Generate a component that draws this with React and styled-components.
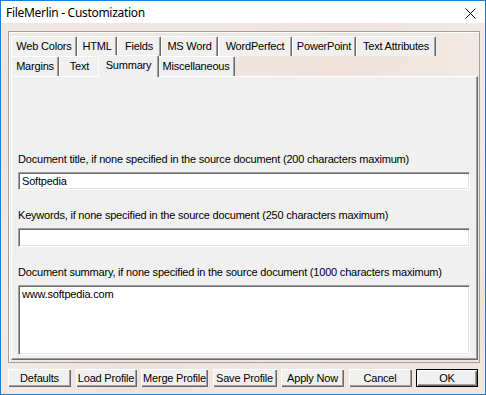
import React from "react";
import styled, { createGlobalStyle } from "styled-components";

const GlobalStyle = createGlobalStyle`
  html, body {
    margin: 0;
    padding: 0;
    background: #ffffff;
  }
  body {
    font-family: "Liberation Sans", Arial, sans-serif;
    font-size: 11px;
    letter-spacing: -0.2px;
    color: #000;
  }
`;

const Window = styled.div`
  width: 486px;
  height: 395px;
  box-sizing: border-box;
  border: 1px solid #1b7fd6;
  display: flex;
  flex-direction: column;
  background-color: #f3ebe6;
  background-image:
    radial-gradient(ellipse at 20% 30%, rgba(232, 214, 204, 0.6), transparent 40%),
    radial-gradient(ellipse at 70% 15%, rgba(236, 222, 214, 0.7), transparent 35%),
    radial-gradient(ellipse at 85% 80%, rgba(234, 220, 210, 0.6), transparent 40%),
    radial-gradient(ellipse at 30% 95%, rgba(236, 222, 214, 0.7), transparent 35%);
`;

const TitleBar = styled.div`
  height: 22px;
  flex: none;
  background: #ffffff;
  display: flex;
  align-items: center;
  justify-content: space-between;
  padding: 0 9px 0 5px;
`;

const Title = styled.span`
  font-family: "Noto Sans", "Segoe UI", sans-serif;
  font-size: 12px;
  letter-spacing: -0.3px;
  color: #000;
`;

const CloseButton = styled.span`
  display: flex;
  width: 12px;
  height: 12px;
  margin-top: 2px;
  align-items: center;
  justify-content: center;
`;

const Client = styled.div`
  flex: 1;
  display: flex;
  flex-direction: column;
  padding: 8px 5px 0 7px;
`;

const Frame = styled.div`
  height: 332px;
  box-sizing: border-box;
  border: 1px solid #a0a0a0;
  box-shadow: inset 1px 1px 0 #ffffff;
  padding: 4px 1px 2px 2px;
  display: flex;
  flex-direction: column;
`;

const TabRow = styled.div`
  display: flex;
  height: 20px;
  align-items: flex-end;
`;

const Tab = styled.div`
  width: ${(p) => p.$w}px;
  height: ${(p) => (p.$active ? 22 : 20)}px;
  margin: ${(p) => (p.$active ? "0 -2px -1px -2px" : "0")};
  position: relative;
  z-index: ${(p) => (p.$active ? 2 : 1)};
  box-sizing: border-box;
  background: #f0f0f0;
  border-top: 1px solid #ffffff;
  border-left: 1px solid #ffffff;
  border-right: 1px solid #696969;
  box-shadow: inset -1px 0 0 #a0a0a0;
  border-radius: 2px 2px 0 0;
  display: flex;
  align-items: center;
  justify-content: center;
  padding-bottom: ${(p) => (p.$active ? 4 : 2)}px;
  white-space: nowrap;
`;

const Panel = styled.div`
  flex: 1;
  box-sizing: border-box;
  background: #f0f0f0;
  border-top: 1px solid #ffffff;
  border-left: 1px solid #ffffff;
  border-right: 1px solid #696969;
  border-bottom: 1px solid #696969;
  box-shadow: inset -1px -1px 0 #a0a0a0;
  padding: 76px 0 0 6px;
  display: flex;
  flex-direction: column;
`;

const Field = styled.div`
  display: flex;
  flex-direction: column;
  margin-bottom: 19px;
  &:last-child {
    margin-bottom: 0;
  }
`;

const Label = styled.label`
  line-height: 13px;
  height: 13px;
  margin-bottom: 6px;
  white-space: nowrap;
`;

const TextBox = styled.div`
  width: 452px;
  height: ${(p) => p.$h}px;
  box-sizing: border-box;
  background: #ffffff;
  border-top: 1px solid #a0a0a0;
  border-left: 1px solid #a0a0a0;
  border-right: 1px solid #ffffff;
  border-bottom: 1px solid #ffffff;
  box-shadow: inset 1px 1px 0 #696969, inset -1px -1px 0 #e3e3e3;
  padding: 2px 3px;
  line-height: 13px;
`;

const ButtonBar = styled.div`
  display: flex;
  justify-content: space-between;
  padding: 6px 0 0 0;
  width: 470px;
`;

const Button = styled.div`
  width: ${(p) => p.$w}px;
  height: 18px;
  box-sizing: border-box;
  overflow: hidden;
  background: #f0f0f0;
  border: 1px solid ${(p) => (p.$default ? "#000000" : "transparent")};
  box-shadow: ${(p) =>
    p.$default
      ? "inset 1px 1px 0 #ffffff, inset -1px -1px 0 #696969, inset -2px -2px 0 #a0a0a0"
      : "inset 1px 1px 0 #ffffff, inset -1px -1px 0 #696969, inset -2px -2px 0 #a0a0a0"};
  border-width: ${(p) => (p.$default ? "1px" : "0")};
  display: flex;
  align-items: center;
  justify-content: center;
  white-space: nowrap;
  padding-bottom: 1px;
`;

const row1 = [
  ["Web Colors", 66],
  ["HTML", 40],
  ["Fields", 44],
  ["MS Word", 57],
  ["WordPerfect", 74],
  ["PowerPoint", 64],
  ["Text Attributes", 80],
];

const row2 = [
  ["Margins", 48],
  ["Text", 41],
  ["Summary", 61, true],
  ["Miscellaneous", 78],
];

const buttons = [
  ["Defaults", 63],
  ["Load Profile", 61],
  ["Merge Profile", 67],
  ["Save Profile", 64],
  ["Apply Now", 63],
  ["Cancel", 63],
  ["OK", 62, true],
];

export default function App() {
  return (
    <>
      <GlobalStyle />
      <Window>
        <TitleBar>
          <Title>FileMerlin - Customization</Title>
          <CloseButton>
            <svg width="11" height="11" viewBox="0 0 11 11">
              <path d="M0.5 0.5 L10.5 10.5 M10.5 0.5 L0.5 10.5" stroke="#000" strokeWidth="1" />
            </svg>
          </CloseButton>
        </TitleBar>
        <Client>
          <Frame>
            <TabRow>
              {row1.map(([t, w]) => (
                <Tab key={t} $w={w}>{t}</Tab>
              ))}
            </TabRow>
            <TabRow>
              {row2.map(([t, w, a]) => (
                <Tab key={t} $w={w} $active={a}>{t}</Tab>
              ))}
            </TabRow>
            <Panel>
              <Field>
                <Label>Document title, if none specified in the source document (200 characters maximum)</Label>
                <TextBox $h={18}>Softpedia</TextBox>
              </Field>
              <Field>
                <Label>Keywords, if none specified in the source document (250 characters maximum)</Label>
                <TextBox $h={19} />
              </Field>
              <Field>
                <Label>Document summary, if none specified in the source document (1000 characters maximum)</Label>
                <TextBox $h={70}>www.softpedia.com</TextBox>
              </Field>
            </Panel>
          </Frame>
          <ButtonBar>
            {buttons.map(([t, w, d]) => (
              <Button key={t} $w={w} $default={d}>{t}</Button>
            ))}
          </ButtonBar>
        </Client>
      </Window>
    </>
  );
}
